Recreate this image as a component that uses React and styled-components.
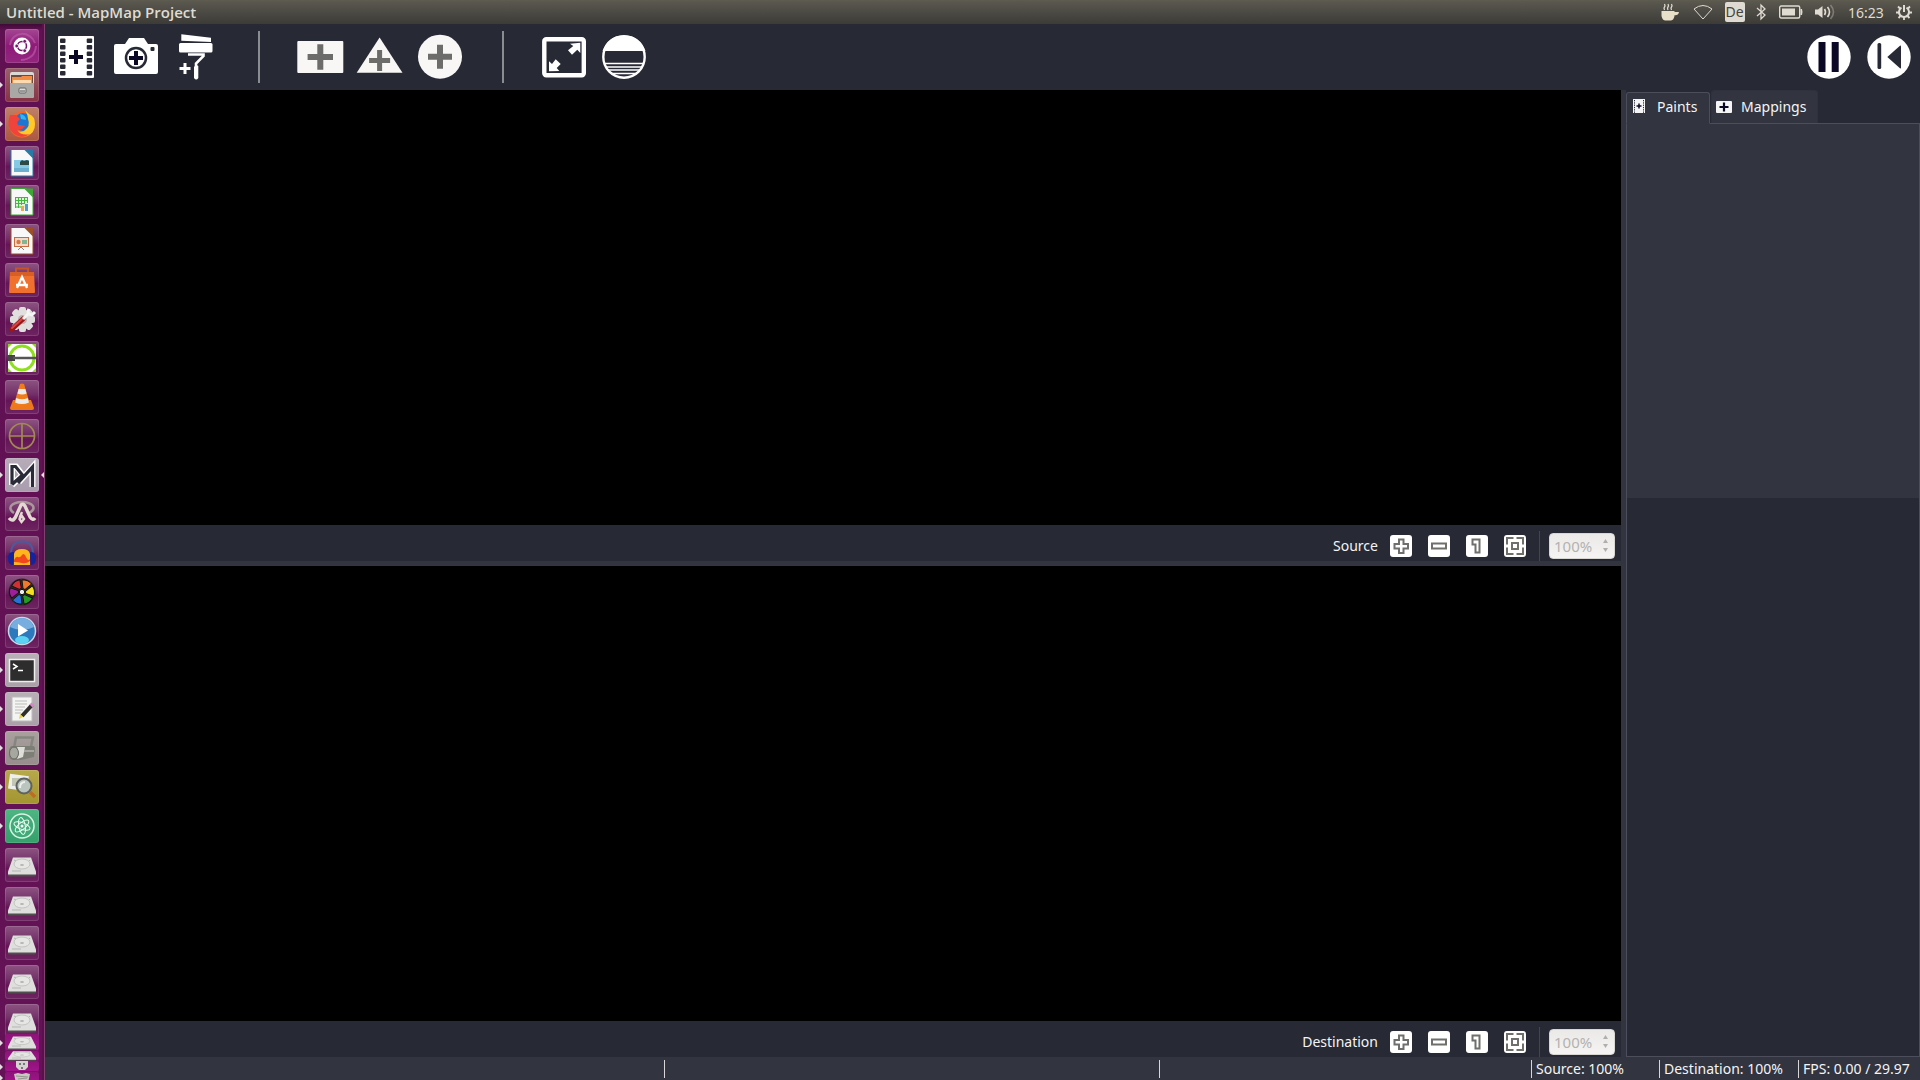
import React from 'react';
import styled, { createGlobalStyle, css } from 'styled-components';

const Global = createGlobalStyle`
  * { box-sizing: border-box; }
  html, body { margin: 0; padding: 0; background: #272935; }
  body { font-family: "Noto Sans", "Open Sans", sans-serif; font-size: 14px; color: #f4f4f4; overflow: hidden; }
  button { font: inherit; color: inherit; background: none; border: 0; padding: 0; margin: 0; cursor: pointer; }
  svg { display: block; }
`;

const Desktop = styled.div`
  height: 100vh;
  display: flex;
  flex-direction: column;
  overflow: hidden;
`;
const MenuBar = styled.header`
  flex: none;
  height: 24px;
  display: flex;
  align-items: center;
  justify-content: space-between;
  padding: 0 4px 0 6px;
  background: linear-gradient(#5f5c50 0, #59574e 2px, #3c3b37 24px);
  color: #dfdbd2;
`;
const WindowTitle = styled.h1`
  margin: 0;
  font: 600 15px/22px "Open Sans", "Noto Sans", sans-serif;
`;
const Indicators = styled.div`
  display: flex;
  align-items: center;
  font-size: 14px;
`;
const Indicator = styled.button`
  width: ${(p) => p.$w}px;
  height: 24px;
  display: flex;
  align-items: center;
  justify-content: center;
`;
const Keyboard = styled.span`
  width: 20px;
  height: 20px;
  border-radius: 2px;
  background: #dfdbd2;
  color: #45443f;
  font-size: 14px;
  line-height: 20px;
`;
const Workspace = styled.div`
  flex: 1;
  min-height: 0;
  display: flex;
`;
const Launcher = styled.nav`
  flex: none;
  width: 45px;
  display: flex;
  flex-direction: column;
  gap: 5px;
  padding: 5px 5px 0;
  overflow: hidden;
  background: linear-gradient(#3f0a36 0, #5f1152 6px, #641256 100%);
  border-right: 1px solid #80416f;
  box-shadow: inset -2px 0 0 #5a104c;
`;
const Tile = styled.button`
  position: relative;
  flex: none;
  width: 34px;
  height: 34px;
  border-radius: 3px;
  background: ${(p) => p.$bg || 'linear-gradient(#8d5381 0, #74326a 40%, #651557 60%, #6d2561 100%)'};
  box-shadow: inset 0 0 0 1px rgba(255, 255, 255, 0.13);
  ${(p) => p.$running && css`
    &::before {
      content: '';
      position: absolute;
      left: -5px;
      top: 14px;
      border: 3px solid transparent;
      border-left-color: #e4dde2;
      border-right-width: 0;
    }
  `}
  ${(p) => p.$focused && css`
    &::after {
      content: '';
      position: absolute;
      right: -5px;
      top: 14px;
      border: 3px solid transparent;
      border-right-color: #e4dde2;
      border-left-width: 0;
    }
  `}
`;
const Folded = styled.div`
  flex: none;
  display: flex;
  flex-direction: column;
  margin-top: -9px;
`;
const FoldedTile = styled(Tile)`
  height: ${(p) => p.$h}px;
  border-radius: 2px;
  background: linear-gradient(#8d1379, #a3158c);
  box-shadow: inset 0 -1px 0 #751365;
  &::before { top: calc(50% - 3px); }
`;
const AppWindow = styled.main`
  flex: 1;
  min-width: 0;
  display: flex;
  flex-direction: column;
`;
const Toolbar = styled.div`
  flex: none;
  height: 66px;
  display: flex;
  padding: 0 1px;
  background: #272935;
`;
const ToolButton = styled.button`
  width: 60px;
  height: 66px;
`;
const ToolDivider = styled.div`
  width: 2px;
  height: 52px;
  margin: 7px 30px 7px 32px;
  background: #8b8c91;
`;
const Spacer = styled.div`
  flex: 1;
`;
const Body = styled.div`
  flex: 1;
  min-height: 0;
  display: flex;
  background: #323440;
`;
const Views = styled.div`
  flex: 1;
  min-width: 0;
  display: flex;
  flex-direction: column;
  gap: 5px;
`;
const View = styled.section`
  flex: ${(p) => p.$grow} 1 0;
  min-height: 0;
  display: flex;
  flex-direction: column;
`;
const Canvas = styled.div`
  flex: 1;
  min-height: 0;
  background: #000;
`;
const ZoomBar = styled.div`
  flex: none;
  height: 36px;
  display: flex;
  align-items: center;
  justify-content: flex-end;
  padding-right: 6px;
  padding-top: 6px;
  background: #272935;
`;
const ZoomLabel = styled.label`
  margin-right: 12px;
  font-size: 14px;
  line-height: 20px;
`;
const ZoomButton = styled.button`
  width: 22px;
  height: 22px;
  margin: 0 16px 0 0;
  border-radius: 3px;
  background: #fff;
`;
const ZoomDivider = styled.div`
  width: 1px;
  height: 30px;
  margin: 0 9px 0 -3px;
  background: #45464c;
`;
const Spin = styled.div`
  width: 66px;
  height: 26px;
  margin-bottom: 1px;
  display: flex;
  align-items: center;
  border-radius: 4px;
  border: 1px solid #d8d6d3;
  background: linear-gradient(#eae9e7, #f5f4f3);
`;
const SpinInput = styled.input`
  width: 44px;
  padding: 0 0 0 4px;
  border: 0;
  background: none;
  color: #b4b2b0;
  font: 15px/20px "Noto Sans", sans-serif;
`;
const Steppers = styled.div`
  display: flex;
  flex-direction: column;
  gap: 1px;
  padding-left: 8px;
`;
const Step = styled.button`
  width: 7px;
  height: 8px;
  display: flex;
  align-items: center;
`;
const Side = styled.aside`
  flex: none;
  width: 299px;
  display: flex;
  flex-direction: column;
  background: #272935;
  border-left: 5px solid #323440;
`;
const TabList = styled.div`
  display: flex;
  align-items: flex-end;
  gap: 1px;
  height: 33px;
`;
const Tab = styled.button`
  position: relative;
  display: flex;
  align-items: center;
  height: ${(p) => (p.$active ? 32 : 33)}px;
  width: ${(p) => (p.$active ? 84 : 107)}px;
  padding: 0 0 ${(p) => (p.$active ? 4 : 0)}px ${(p) => (p.$active ? 6 : 4)}px;
  gap: ${(p) => (p.$active ? 12 : 9)}px;
  margin-bottom: ${(p) => (p.$active ? -1 : 0)}px;
  background: #323440;
  border: 1px solid ${(p) => (p.$active ? '#4c4e5b' : '#2f313d')};
  border-bottom-color: #323440;
  border-radius: 3px 3px 0 0;
  z-index: ${(p) => (p.$active ? 1 : 0)};
`;
const PaintList = styled.div`
  flex: 374 1 0;
  background: #323440;
  border: 1px solid #4c4e5b;
  border-bottom: 0;
`;
const Properties = styled.div`
  flex: 559 1 0;
  border: 1px solid #4c4e5b;
  border-top: 0;
`;
const StatusBar = styled.footer`
  flex: none;
  height: 23px;
  display: flex;
  justify-content: flex-end;
  align-items: center;
  background: #323440;
`;
const StatusCell = styled.div`
  flex: none;
  width: ${(p) => p.$w}px;
  height: 18px;
  padding-left: 4px;
  border-left: 1px solid #d7d7da;
  font-size: 14px;
  line-height: 18px;
  white-space: nowrap;
`;

const Plus = ({ x, y, r, t, fill }) => (
  <path fill={fill} d={`M${x - t / 2} ${y - r}h${t}v${r - t / 2}h${r - t / 2}v${t}h${-(r - t / 2)}v${r - t / 2}h${-t}v${-(r - t / 2)}h${-(r - t / 2)}v${-t}h${r - t / 2}z`} />
);

const tools = {
  film: (
    <>
      <rect x="12" y="12" width="36" height="42" rx="1" fill="#fff" />
      {[14.5, 21, 27.5, 34, 40.5, 47].map((y) => (
        <g key={y} fill="#272935"><rect x="14" y={y} width="5.5" height="4.5" rx="1" /><rect x="40.7" y={y} width="5.5" height="4.5" rx="1" /></g>
      ))}
      <Plus x={30} y={33} r={7} t={4} fill="#0a0825" />
    </>
  ),
  camera: (
    <>
      <path d="M10 20h9l4-6h15l4 6h8q2 0 2 2v26q0 2-2 2H10q-2 0-2-2V22q0-2 2-2z" fill="#fff" />
      <circle cx="30" cy="34" r="10" fill="none" stroke="#272935" strokeWidth="2.5" />
      <rect x="44.5" y="23" width="4" height="4" rx="1" fill="#272935" />
      <Plus x={30} y={34} r={7} t={4} fill="#0a0825" />
    </>
  ),
  roller: (
    <g fill="#fff">
      <path d="M15.3 10.2 45 13.7V18L15.3 16.8z" />
      <rect x="13" y="19" width="33.5" height="9.5" rx="1.5" />
      <path d="M22 30.500h15.500v1.500L30 39.500v4" fill="none" stroke="#fff" strokeWidth="2.6" />
      <path d="M28 43q2-3 4.300-1v12q-2 3-4.300 0z" />
      <Plus x={19} y={44.6} r={5.5} t={3} fill="#fff" />
    </g>
  ),
  quad: (<><rect x="7.3" y="17" width="46" height="32" rx="1" fill="#f8f7f5" /><Plus x={30.3} y={33} r={12.7} t={6} fill="#6c6c6a" /></>),
  triangle: (<><path d="M29.600 13.500 52.500 48.800H6.700z" fill="#f8f7f5" /><Plus x={29.6} y={36.5} r={10.5} t={5} fill="#6c6c6a" /></>),
  ellipse: (<><circle cx="30" cy="32.7" r="22" fill="#f8f7f5" /><Plus x={30} y={32.7} r={12} t={6} fill="#6c6c6a" /></>),
  fullscreen: (
    <>
      <rect x="10.3" y="15.3" width="39.5" height="36" rx="2" fill="none" stroke="#fff" strokeWidth="4.4" />
      <path fill="#fff" d="M36 19.700 46.300 18.700V29l-3-3.300-5.300 5-4-4.400 5.300-4.300zM15 47.300V37.300l3 2.700 3.700-4.700 5 4.700-4 4 2.600 3z" />
    </>
  ),
  testCard: (
    <>
      <path d="M8.500 27Q14 11.500 30 11.500T51.500 27z" fill="#fff" />
      <circle cx="30" cy="33" r="20.7" fill="none" stroke="#fff" strokeWidth="2.4" />
      <path d="M10 39.500h40M12 43h36M14 46h32M17 49.500h26" stroke="#fff" strokeWidth="1.5" />
    </>
  ),
  pause: (<><circle cx="30" cy="33" r="21.7" fill="#fff" /><path fill="#0a0825" d="M19.500 18h7v30h-7zM32.700 18h7v30h-7z" /></>),
  rewind: (<><circle cx="30" cy="33" r="21.7" fill="#fff" /><rect x="18.5" y="19" width="3.7" height="26" rx="1.5" fill="#272935" /><path fill="#272935" d="M28.300 33 41 21.700q1-.7 1 1V43.500q0 1.500-1 .8z" /></>),
};

const Tool = ({ name, label }) => (
  <ToolButton aria-label={label}>
    <svg width="60" height="66" viewBox="0 0 60 66">{tools[name]}</svg>
  </ToolButton>
);

const Document = ({ c, children }) => (
  <>
    <path d="M6 3.500h15l7 8V30H6z" fill="#f8f8f8" stroke={c} strokeWidth="1" />
    <path d="M19 3.500h9v9z" fill={c} />
    {children}
  </>
);
const Disk = () => (
  <>
    <path d="M3 24h28v3.500q0 1-1.500 1h-25q-1.500 0-1.500-1z" fill="#4f4f4d" />
    <path d="M8 9.500h18l5 14v3H3v-3z" fill="#dededc" />
    <ellipse cx="17" cy="16" rx="8" ry="5" fill="#e6e6e5" stroke="#c3c3c1" />
    <ellipse cx="17" cy="17" rx="2" ry="1" fill="#b5b5b3" />
    <path d="M7 23h9M9 12l2 1M24 12l1 1" stroke="#b5b5b3" />
  </>
);

const ring = [0, 60, 120, 180, 240, 300];
const art = {
  ubuntu: (
    <>
      <path d="M5 16C7 1 26 2 30 14M31 17q-1 13-15 14" fill="none" stroke="#c060ab" strokeWidth="2" opacity=".6" />
      <circle cx="17" cy="17" r="8.5" fill="#fff" />
      <circle cx="17" cy="17" r="4.5" fill="none" stroke="#74186a" strokeWidth="1.6" />
      <g fill="#74186a" stroke="#fff" strokeWidth=".8"><circle cx="11.7" cy="17" r="1.9" /><circle cx="19.7" cy="12.3" r="1.9" /><circle cx="19.7" cy="21.7" r="1.9" /></g>
    </>
  ),
  files: (
    <>
      <rect x="5" y="4" width="24" height="26" rx="2" fill="#d9d8d5" />
      <path d="M6 7h22v8H6z" fill="#6d4b38" /><path d="M7 9h9l1-1h10v7H7z" fill="#f28c45" /><path d="M8 12h18v3H8z" fill="#ffd9ae" />
      <path d="M5 15h24v13q0 2-2 2H7q-2 0-2-2z" fill="#a9a8a5" /><rect x="14" y="20" width="7" height="5" rx="1" fill="#ddd" stroke="#666" /><path d="M15 23h5" stroke="#555" />
    </>
  ),
  firefox: (
    <>
      <circle cx="17" cy="17.5" r="13" fill="#f5652d" /><circle cx="18" cy="15" r="9" fill="#1c76d1" />
      <path d="M20 3q3 5 3 9 3 7-4 12-5 2-9-1 5 7 12 6 8-3 8-12 0-8-6-10z" fill="#ffc928" />
      <path d="M5 8q-4 12 3 18 9 7 17 1-9 2-13-4l5-1 3-3-7-1-1-3 3-3-4-4z" fill="#f0433c" /><path d="M15 7q6 1 6 6l-5-1z" fill="#35b4ef" />
    </>
  ),
  writer: (<Document c="#277aa5"><rect x="9" y="14" width="15" height="12" fill="#86c9e5" /><path d="M9 22h15v4H9z" fill="#6cb0d0" /><path d="M15 19v-3l2-2 2 1 3-1 2 1v4z" fill="#2d4a43" /></Document>),
  calc: (<Document c="#3ca735"><path d="M10 12h13v11H10z" fill="#dff4d9" /><path d="M10 12.500h13M10 15.500h13M10 18.500h10M10 22h7M10.500 12v11M13.500 12v11M16.500 12v8M19.500 12v6M22.500 12v6" stroke="#43b93b" /><path d="M16 21h3v5h-3z" fill="#e7aa50" /><path d="M20 19h3v7h-3z" fill="#4f9dcc" /></Document>),
  impress: (<Document c="#9c4f27"><rect x="9.5" y="13.5" width="14" height="9" fill="#f5d9c8" stroke="#c66d41" /><circle cx="13.5" cy="18" r="2.2" fill="#d67844" /><path d="M17 16h5v4h-5z" fill="#83b590" /><path d="M13 26l3-3 3 3" stroke="#8e8078" fill="none" /></Document>),
  software: (
    <>
      <path d="M11 9V5.500h12V9" fill="none" stroke="#c65327" strokeWidth="2" /><path d="M5 9h24l1 20q0 1-1 1H5q-1 0-1-1z" fill="#f0702d" /><path d="M5 9h24v4H5z" fill="#d65e27" />
      <path d="M12 25l5-11 5 11M11 22h12" fill="none" stroke="#fff" strokeWidth="2.3" />
    </>
  ),
  settings: (
    <>
      <g fill="#e0dfdd">{[0, 45, 90, 135].map((a) => <rect key={a} x="14" y="5" width="7" height="25" rx="2" transform={`rotate(${a} 17.5 17.5)`} />)}<circle cx="17.5" cy="17.5" r="10" /></g>
      <circle cx="17.5" cy="17.5" r="4.5" fill="#b8b2b7" /><path d="M7 27l11-10" stroke="#9d1717" strokeWidth="5" strokeLinecap="round" /><path d="M7 26l10-9" stroke="#d74444" strokeWidth="2" strokeLinecap="round" />
      <path d="M18 17l5-5" stroke="#f4f4f4" strokeWidth="3" /><path d="M24 7q-3 5 3 6l3-3" fill="none" stroke="#f4f4f4" strokeWidth="3" />
    </>
  ),
  ringTool: (
    <>
      <rect x="3" y="3" width="28" height="28" fill="#fff" /><path d="M3 3h4L3 7zM31 3v4l-4-4zM3 31v-4l4 4zM31 31h-4l4-4z" fill="#91d52a" />
      <circle cx="17" cy="17" r="12" fill="none" stroke="#8ee01c" strokeWidth="3" /><path d="M3 14h7v6H3z" fill="#444" /><path d="M8 17h23" stroke="#555" strokeWidth="2.5" />
    </>
  ),
  vlc: (
    <>
      <path d="M8 20h18l3 8q0 2-2 2H7q-2 0-2-2z" fill="#ee791b" /><path d="M15 4q2-1 4 0l6 20q-8 4-16 0z" fill="#f07d1c" />
      <path d="M13.700 9h6.600l1.300 4.500q-4.600 2-9.200 0zM11.300 18q5.700 2.500 11.400 0l1.300 4.500q-7 3-14 0z" fill="#ececec" />
    </>
  ),
  target: (<g fill="none" stroke="#a18a51" strokeWidth="1.7"><circle cx="17" cy="17" r="12.5" /><path d="M17 4v26M4 17h26" /></g>),
  mapmap: (
    <g fill="none" strokeLinejoin="miter">
      <path d="M7 27V8.500h4L17.500 17 7 27M14 24L27.500 9V29" stroke="#fff" strokeWidth="6" />
      <path d="M7 26.500V8.500h3.500L17.500 17 7 26.500M13 25L27.500 9V29" stroke="#2a2b38" strokeWidth="3.2" />
    </g>
  ),
  knot: (
    <g fill="none">
      <path d="M9 16Q4 13 6 9q3-4 11-4t11 4q2 4-4 7" stroke="#a9979b" strokeWidth="2.5" />
      <path d="M4 21q4 5 7-2l5-11q2-2 4 1l5 11q3 4 5 1" stroke="#e3dad2" strokeWidth="3.4" />
      <path d="M17 15l-2.500 6M14.500 22l2 3 2.500-3-2-3z" stroke="#e3dad2" strokeWidth="2.4" />
    </g>
  ),
  audacity: (
    <>
      <path d="M6 18Q6 5.500 17 5.500T28 18" fill="none" stroke="#4b5a9c" strokeWidth="2" />
      <path d="M9 29V18q1-5 8-5t8 5v11z" fill="#ffb61d" /><path d="M9 24q2-4 4-3t4-2 4 2 4 2v2q-4 3-8 2t-8-1z" fill="#f3461c" />
      <path d="M9 16q-6-1-6 6t5 7zM25 16q6-1 6 6t-5 7z" fill="#12259b" />
    </>
  ),
  shutter: (
    <>
      <circle cx="17" cy="17" r="13.5" fill="#302a2c" />
      {['#f2792a', '#f4df20', '#279a26', '#2670d6', '#9f1e99', '#d22e34'].map((c, i) => <path key={c} d="M18 13.500L17 5Q23 4.500 26.500 9L20 14.500z" fill={c} stroke="#111" strokeWidth=".9" transform={`rotate(${ring[i]} 17 17)`} />)}
      <circle cx="17" cy="17" r="2.7" fill="#eee" stroke="#111" />
    </>
  ),
  player: (<><circle cx="17" cy="17" r="13.5" fill="#2d79bd" stroke="#c9d7e7" strokeWidth="1.5" /><path d="M5 13q4-9 12-9t12 9q-12 6-24 0z" fill="#78ade0" /><ellipse cx="17" cy="26" rx="7" ry="4" fill="#5cd1f1" /><path d="M13 10l10 6.500-10 6z" fill="#fff" /></>),
  terminal: (<><rect x="4.5" y="6.5" width="25" height="22" fill="#2d2d2d" stroke="#eee" strokeWidth="1.5" /><path d="M8 11l4 2.500L8 16M13 17.500h5" fill="none" stroke="#fff" strokeWidth="1.5" /></>),
  editor: (<><rect x="7" y="5" width="20" height="24" fill="#f4f4f2" stroke="#bbb" /><path d="M10 9h12M10 12h12M10 15h10M10 18h8M10 21h6" stroke="#bbb" /><path d="M17 24L27 13" stroke="#302d2d" strokeWidth="4" /><path d="M26 14l2-2" stroke="#d28ac3" strokeWidth="4" /><path d="M14 27l1-5 3 3z" fill="#e9d043" /></>),
  printer: (
    <>
      <path d="M9 17l2-10.500h17l-2 9" fill="none" stroke="#85867f" strokeWidth="2.5" />
      <path d="M7 15h21q2 0 2 3l-1 8-13 3H8q-5-1-4-8 0-5 3-6z" fill="#7d7f77" /><path d="M12 16h8l-2 10-6 2q3-5 0-12z" fill="#dedfd9" />
      <ellipse cx="9" cy="22" rx="4.5" ry="6" fill="#a6a89f" stroke="#696b64" /><path d="M19 20h10" stroke="#a5a79e" strokeWidth="2" />
    </>
  ),
  viewer: (<><rect x="4" y="5" width="19" height="15" fill="#eee" transform="rotate(8 14 12)" /><rect x="7" y="8" width="12" height="8" fill="#c1c7b3" /><circle cx="19" cy="16" r="7.5" fill="#b9c5bd" stroke="#5e6260" strokeWidth="2" /><path d="M15 18q0-6 5-6" stroke="#eee" strokeWidth="2" fill="none" /><path d="M25 22l5 5" stroke="#bd6d22" strokeWidth="3.5" /></>),
  atom: (<><circle cx="17" cy="17" r="12" fill="#42aa79" stroke="#d8f4e4" strokeWidth="1.5" /><g fill="none" stroke="#e5fff0">{[20, 80, 140].map((a) => <ellipse key={a} cx="17" cy="17" rx="8.5" ry="3.3" transform={`rotate(${a} 17 17)`} />)}</g><circle cx="17" cy="17" r="1.5" fill="#fff" /></>),
  disk: <Disk />,
};
const grey = 'linear-gradient(#b9b0b7, #aaa1a8)';
const launcherItems = [
  ['ubuntu', 'Search your computer', 'linear-gradient(#a44793, #8d1a78 50%, #93267f)'],
  ['files', 'Files', 'linear-gradient(#99606a, #863244)', 1],
  ['firefox', 'Firefox', 'linear-gradient(#be806a, #ac5740)', 1],
  ['writer', 'Writer'], ['calc', 'Calc'], ['impress', 'Impress'], ['software', 'Software'], ['settings', 'Settings'],
  ['ringTool', 'Ring'], ['vlc', 'VLC'], ['target', 'Target'],
  ['mapmap', 'MapMap', 'linear-gradient(#b7acba, #a99cad)', 1, 1],
  ['knot', 'Knot'], ['audacity', 'Audacity'], ['shutter', 'Shutter'], ['player', 'Player'],
  ['terminal', 'Terminal', grey, 1], ['editor', 'Text Editor', grey, 1], ['printer', 'Printers', 'linear-gradient(#aaa09e, #978d8c)', 1],
  ['viewer', 'Image Viewer', 'linear-gradient(#b7a84b, #a39530)', 1], ['atom', 'Atom', 'linear-gradient(#4eb583, #35a06b)', 1],
  ['disk', 'Volume 1'], ['disk', 'Volume 2'], ['disk', 'Volume 3'], ['disk', 'Volume 4'], ['disk', 'Volume 5'],
];

const zoomArt = {
  in: <path d="M9 4.500h4.500V9H18v4.500h-4.500V18H9v-4.500H4.500V9H9z" />,
  out: <path d="M4 8.500h14v5H4z" />,
  actual: <path d="M6.500 4.500h7v13H9.500v-8h-3z" />,
  fit: <path d="M8 8h6v6H8zM3 9.500V3h6.500M12.500 3H19v6.500M19 12.500V19h-6.500M9.500 19H3v-6.500" />,
};
const ZoomControls = ({ label }) => (
  <ZoomBar>
    <ZoomLabel htmlFor={`zoom-${label}`}>{label}</ZoomLabel>
    {Object.entries(zoomArt).map(([name, shape]) => (
      <ZoomButton key={name} aria-label={`${label} zoom ${name}`}>
        <svg width="22" height="22" viewBox="0 0 22 22" fill="none" stroke="#6f6f6b" strokeWidth="2">{shape}</svg>
      </ZoomButton>
    ))}
    <ZoomDivider />
    <Spin>
      <SpinInput id={`zoom-${label}`} defaultValue="100%" disabled />
      <Steppers>
        <Step aria-label="Increase" disabled><svg width="7" height="4"><path d="M1 4 3.500 0 6 4z" fill="#b0aeac" /></svg></Step>
        <Step aria-label="Decrease" disabled><svg width="7" height="4"><path d="M1 0 3.500 4 6 0z" fill="#b0aeac" /></svg></Step>
      </Steppers>
    </Spin>
  </ZoomBar>
);

export default function App() {
  return (
    <Desktop>
      <Global />
      <MenuBar>
        <WindowTitle>Untitled - MapMap Project</WindowTitle>
        <Indicators>
          <Indicator $w={32} aria-label="Caffeine"><svg width="20" height="20" viewBox="0 0 20 20"><path d="M1.500 9h13v5q-1 4.500-4 4.500H5.500q-3 0-4-4.500z" fill="#e8e0c8" /><path d="M14 10h5q-1 4-5 3" fill="#e8e0c8" /><path d="M4.500 8q-1-2 0-3t0-3M8 8q-1-2 0-3t0-3M11.500 8q-1-2 0-3t0-3" fill="none" stroke="#dfdbd2" strokeWidth="1.3" /></svg></Indicator>
          <Indicator $w={33} aria-label="Network"><svg width="20" height="16" viewBox="0 0 20 16"><path d="M1 5q9-7 18 0l-9 10z" fill="none" stroke="#dfdbd2" /></svg></Indicator>
          <Indicator $w={31} aria-label="Keyboard layout"><Keyboard>De</Keyboard></Indicator>
          <Indicator $w={22} aria-label="Bluetooth"><svg width="10" height="18" viewBox="0 0 10 18"><path d="M1 5l8 7-4 4V2l4 4-8 7" fill="none" stroke="#dfdbd2" strokeWidth="1.3" /></svg></Indicator>
          <Indicator $w={38} aria-label="Battery"><svg width="24" height="14" viewBox="0 0 24 14"><rect x=".7" y="1" width="20" height="12" rx="1.5" fill="none" stroke="#dfdbd2" strokeWidth="1.4" /><path d="M3 3.500h13v7H3zM21.500 4H23q1 3 0 6h-1.500z" fill="#dfdbd2" /></svg></Indicator>
          <Indicator $w={30} aria-label="Sound"><svg width="20" height="16" viewBox="0 0 20 16"><path d="M0 5.500h3L7.500 2v12L3 10.500H0z" fill="#dfdbd2" /><g fill="none" stroke="#dfdbd2" strokeWidth="1.6"><path d="M9.500 5q2 3 0 6M12.500 3q4 5 0 10" /><path d="M15.500 1q6 7 0 14" opacity=".35" /></g></svg></Indicator>
          <Indicator $w={52}>16:23</Indicator>
          <Indicator $w={24} aria-label="System">
            <svg width="16" height="16" viewBox="0 0 16 16" fill="none" stroke="#dfdbd2" strokeWidth="2">
              <path d="M5.500 3.700a5 5 0 1 0 5 0M8 1v7" />
              <path d="M2 2.500l2 2M14 2.500l-2 2M0 8.500h3M13 8.500h3M2.500 14l2-2M13.500 14l-2-2M8 13v3" strokeWidth="1.8" />
            </svg>
          </Indicator>
        </Indicators>
      </MenuBar>
      <Workspace>
        <Launcher>
          {launcherItems.map(([name, label, bg, running, focused]) => (
            <Tile key={label} aria-label={label} $bg={bg} $running={running} $focused={focused}>
              <svg width="34" height="34" viewBox="0 0 34 34">{art[name]}</svg>
            </Tile>
          ))}
          <Folded>
            <FoldedTile $h={17} $running aria-label="Volume 6"><svg width="34" height="17" viewBox="0 6 34 24" preserveAspectRatio="none"><Disk /></svg></FoldedTile>
            <FoldedTile $h={10} aria-label="Volume 7"><svg width="34" height="10" viewBox="0 9 34 20" preserveAspectRatio="none"><Disk /></svg></FoldedTile>
            <FoldedTile $h={11} $running aria-label="USB drive"><svg width="34" height="11"><path d="M11 0h12v6l-3 3h-6l-3-3z" fill="#d3d2d0" /><path d="M14 2h2v2h-2zM18 2h2v2h-2zM16 6h2v2h-2z" fill="#777" /></svg></FoldedTile>
            <FoldedTile $h={12} $running aria-label="Trash"><svg width="34" height="12"><path d="M9 2l4-1 4 1 4-1 4 1-2 9H11z" fill="#c9c7c1" /><path d="M11 4l12 1M13 7l9-1" stroke="#96948e" /></svg></FoldedTile>
          </Folded>
        </Launcher>
        <AppWindow>
          <Toolbar>
            <Tool name="film" label="Import media" />
            <Tool name="camera" label="Open camera" />
            <Tool name="roller" label="Add colour" />
            <ToolDivider />
            <Tool name="quad" label="Add quad" />
            <Tool name="triangle" label="Add triangle" />
            <Tool name="ellipse" label="Add ellipse" />
            <ToolDivider />
            <Tool name="fullscreen" label="Fullscreen" />
            <Tool name="testCard" label="Test signal" />
            <Spacer />
            <Tool name="pause" label="Pause" />
            <Tool name="rewind" label="Rewind" />
          </Toolbar>
          <Body>
            <Views>
              <View $grow={471}><Canvas /><ZoomControls label="Source" /></View>
              <View $grow={491}><Canvas /><ZoomControls label="Destination" /></View>
            </Views>
            <Side>
              <TabList role="tablist">
                <Tab role="tab" aria-selected="true" $active>
                  <svg width="12" height="14" viewBox="0 0 12 14"><rect width="12" height="14" fill="#f5f5f5" /><path d="M1.500 1v13M10.500 1v13" stroke="#272935" strokeWidth="1" strokeDasharray="1.3 1" /><Plus x={6} y={7} r={2.5} t={1.5} fill="#0a0825" /></svg>
                  Paints
                </Tab>
                <Tab role="tab" aria-selected="false">
                  <svg width="16" height="12" viewBox="0 0 16 12"><rect width="16" height="12" rx="1" fill="#f5f5f5" /><Plus x={8} y={6} r={4.5} t={2.2} fill="#0a0825" /></svg>
                  Mappings
                </Tab>
              </TabList>
              <PaintList />
              <Properties />
            </Side>
          </Body>
          <StatusBar>
            <StatusCell $w={495} />
            <StatusCell $w={372} />
            <StatusCell $w={128}>Source: 100%</StatusCell>
            <StatusCell $w={139}>Destination: 100%</StatusCell>
            <StatusCell $w={122}>FPS: 0.00 / 29.97</StatusCell>
          </StatusBar>
        </AppWindow>
      </Workspace>
    </Desktop>
  );
}
